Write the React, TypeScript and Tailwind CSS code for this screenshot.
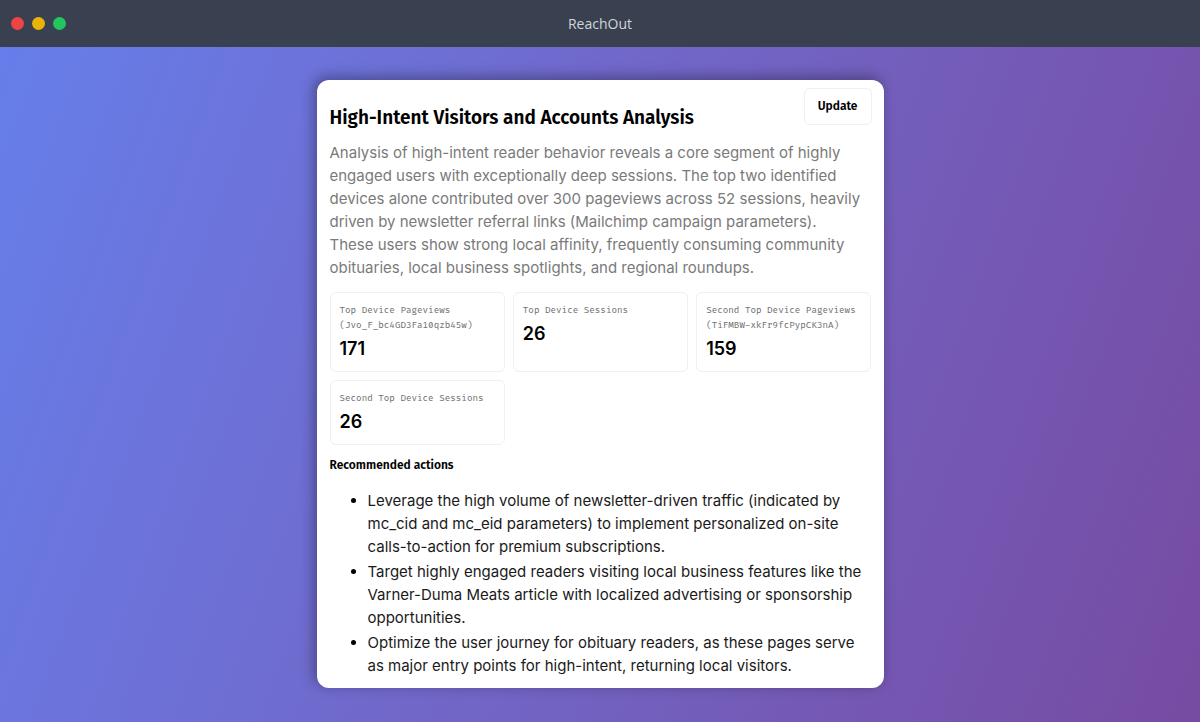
import React from "react";

const stats = [
  { label: "Top Device Pageviews", device: "(Jvo_F_bc4GD3Fa10qzb45w)", value: "171" },
  { label: "Top Device Sessions", value: "26" },
  { label: "Second Top Device Pageviews", device: "(TiFMBW-xkFr9fcPypCK3nA)", value: "159" },
  { label: "Second Top Device Sessions", value: "26" },
];

const actions = [
  "Leverage the high volume of newsletter-driven traffic (indicated by mc_cid and mc_eid parameters) to implement personalized on-site calls-to-action for premium subscriptions.",
  "Target highly engaged readers visiting local business features like the Varner-Duma Meats article with localized advertising or sponsorship opportunities.",
  "Optimize the user journey for obituary readers, as these pages serve as major entry points for high-intent, returning local visitors.",
];

const TitleBar = () => {
  return (
    <header className="grid grid-cols-[1fr_auto_1fr] items-center h-[47px] px-[11px] bg-[#394150]">
      <div className="flex gap-2">
        <span className="size-[13px] rounded-full bg-[#ef4444]" />
        <span className="size-[13px] rounded-full bg-[#eab308]" />
        <span className="size-[13px] rounded-full bg-[#22c55e]" />
      </div>
      <p className="font-['Segoe_UI','Open_Sans',sans-serif] text-sm text-[#d1d5db]">ReachOut</p>
    </header>
  );
};

const StatCard = ({ label, device, value }: { label: string; device?: string; value: string }) => {
  return (
    <div className="rounded-md border border-[#f0f0f0] py-[10px] pl-[9px]">
      <dt className="font-['Fira_Code','Fira_Mono','DejaVu_Sans_Mono',monospace] text-[9px] leading-[15px] text-[#6f6f6f]">
        {label}
        {device && <span className="block">{device}</span>}
      </dt>
      <dd className="mt-1 text-lg leading-6 font-semibold">{value}</dd>
    </div>
  );
};

const App = () => {
  return (
    <div className="min-h-screen flex flex-col font-['Inter',sans-serif] text-black">
      <TitleBar />
      <main className="grow flex justify-center items-start py-[33px] bg-linear-110 from-[#667eea] to-[#764ba2]">
        <section className="w-full max-w-[567px] rounded-xl bg-white pl-[13px] pr-3 pt-2 pb-[11px] shadow-[-3px_-3px_14px_rgba(0,0,0,0.35)]">
          <div className="flex items-start justify-between">
            <h1 className="mt-4 font-['Fira_Sans','Noto_Sans',sans-serif] text-[19px] leading-7 font-semibold">
              High-Intent Visitors and Accounts Analysis
            </h1>
            <button
              type="button"
              className="h-[37px] px-[13px] pb-[2px] rounded-md border border-[#f0f0f0] font-['Fira_Sans','Noto_Sans',sans-serif] text-xs font-semibold"
            >
              Update
            </button>
          </div>
          <p className="mt-[9px] pr-[9px] text-[15px] leading-[23px] text-[#7a7a7a]">
            Analysis of high-intent reader behavior reveals a core segment of highly engaged users with
            exceptionally deep sessions. The top two identified devices alone contributed over 300
            pageviews across 52 sessions, heavily driven by newsletter referral links (Mailchimp campaign
            parameters). These users show strong local affinity, frequently consuming community
            obituaries, local business spotlights, and regional roundups.
          </p>
          <dl className="grid grid-cols-3 gap-2 mt-[13px]">
            {stats.map((stat) => (
              <StatCard key={stat.label} {...stat} />
            ))}
          </dl>
          <h2 className="mt-3 font-['Fira_Sans','Noto_Sans',sans-serif] text-xs leading-4 font-semibold">
            Recommended actions
          </h2>
          <ul className="list-disc flex flex-col gap-[2px] mt-4 pl-[38px] text-[15px] leading-[23px] text-[#1a1a1a] marker:text-black">
            {actions.map((action) => (
              <li key={action}>{action}</li>
            ))}
          </ul>
        </section>
      </main>
    </div>
  );
};

export default App;
